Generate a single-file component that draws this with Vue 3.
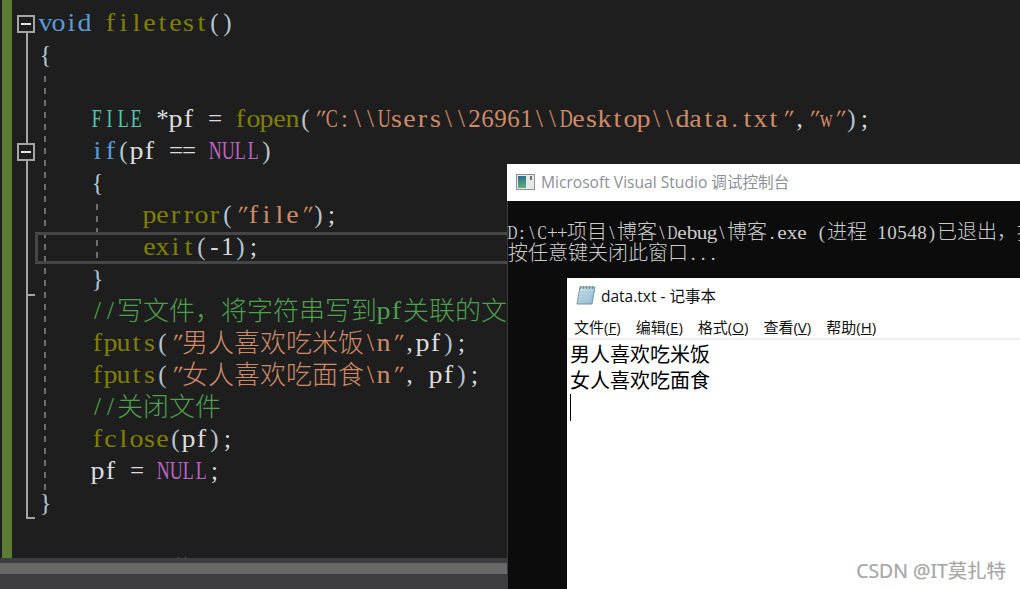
<script setup>
const code = [
  [['kw', 'void '], ['fn', 'filetest'], ['pn', '()']],
  [['pn', '{']],
  [],
  [['ty', '    FILE'], ['id', ' *pf = '], ['fn', 'fopen'], ['pn', '('], ['st', '"C:\\\\Users\\\\26961\\\\Desktop\\\\data.txt"'], ['id', ','], ['st', '"w"'], ['pn', ')'], ['id', ';']],
  [['kw', '    if'], ['pn', '('], ['id', 'pf == '], ['mc', 'NULL'], ['pn', ')']],
  [['pn', '    {']],
  [['fn', '        perror'], ['pn', '('], ['st', '"file"'], ['pn', ')'], ['id', ';']],
  [['fn', '        exit'], ['pn', '('], ['id', '-1'], ['pn', ')'], ['id', ';']],
  [['pn', '    }']],
  [['cm', '    //'], ['cm cjk', '写文件，将字符串写到'], ['cm', 'pf'], ['cm cjk', '关联的文件中']],
  [['fn', '    fputs'], ['pn', '('], ['st', '"'], ['st cjk', '男人喜欢吃米饭'], ['st', '\\n"'], ['id', ',pf'], ['pn', ')'], ['id', ';']],
  [['fn', '    fputs'], ['pn', '('], ['st', '"'], ['st cjk', '女人喜欢吃面食'], ['st', '\\n"'], ['id', ', pf'], ['pn', ')'], ['id', ';']],
  [['cm', '    //'], ['cm cjk', '关闭文件']],
  [['fn', '    fclose'], ['pn', '('], ['id', 'pf'], ['pn', ')'], ['id', ';']],
  [['id', '    pf = '], ['mc', 'NULL'], ['id', ';']],
  [['pn', '}']],
  [],
  [['kw', 'void '], ['fn', 'test1'], ['pn', '()']],
]
const consoleLines = [
  [['', 'D:\\C++'], ['cjk', '项目'], ['', '\\'], ['cjk', '博客'], ['', '\\Debug\\'], ['cjk', '博客'], ['', '.exe ('], ['cjk', '进程'], ['', ' 10548)'], ['cjk', '已退出，按下任意键']],
  [['cjk', '按任意键关闭此窗口'], ['', '...']],
]
const menus = [['文件', 'F'], ['编辑', 'E'], ['格式', 'O'], ['查看', 'V'], ['帮助', 'H']]
const isCjk = (tok) => tok[0].includes('cjk')
const cellClass = (ch) => ({
  squeezed: /[A-Zmw]/.test(ch),
  stretched: /[a-ln-vx-z]/.test(ch),
  slanted: ch === '"',
})
</script>

<template>
  <div class="desktop">
    <section class="editor">
      <div class="code-area">
        <div class="change-bar"></div>
        <div class="code">
          <div v-for="(line, i) in code" :key="i" class="line">
            <template v-for="(tok, j) in line" :key="j">
              <span v-if="isCjk(tok)" :class="tok[0]">{{ tok[1] }}</span>
              <span v-else :class="tok[0]"><span v-for="(ch, k) in tok[1]" :key="k" class="cell" :class="cellClass(ch)">{{ ch }}</span></span>
            </template>
          </div>
        </div>
        <i class="fold-line one"></i>
        <i class="fold-line two"></i>
        <i class="fold-tick"></i>
        <i class="fold-end"></i>
        <i class="fold-box first"></i>
        <i class="fold-box second"></i>
        <i class="guide outer"></i>
        <i class="guide inner"></i>
        <div class="current-line"></div>
      </div>
      <div class="hscroll"><div class="thumb"></div></div>
    </section>

    <section class="console">
      <header class="console-title">
        <svg class="console-icon" width="19" height="18" viewBox="0 0 19 18">
          <defs>
            <linearGradient id="cg" x1="0" y1="0" x2="0" y2="1">
              <stop offset="0" stop-color="#2f6f8f" />
              <stop offset="1" stop-color="#5fae7c" />
            </linearGradient>
          </defs>
          <rect x="0.5" y="1.5" width="18" height="15" fill="#e6e8ea" stroke="#8d9094" />
          <rect x="2" y="3" width="8" height="12" fill="url(#cg)" />
          <rect x="14" y="3" width="2" height="4" fill="#6f7478" />
        </svg>
        <span>Microsoft Visual Studio 调试控制台</span>
      </header>
      <div class="console-body">
        <div v-for="(line, i) in consoleLines" :key="i" class="console-line">
          <template v-for="(tok, j) in line" :key="j">
            <span v-if="isCjk(tok)" class="wide">{{ tok[1] }}</span>
            <span v-else><span v-for="(ch, k) in tok[1]" :key="k" class="cell" :class="cellClass(ch)">{{ ch }}</span></span>
          </template>
        </div>
      </div>
    </section>

    <section class="notepad">
      <header class="note-title">
        <svg width="20" height="21" viewBox="0 0 20 21">
          <defs>
            <linearGradient id="ng" x1="0" y1="0" x2="1" y2="1">
              <stop offset="0" stop-color="#d8e9ef" />
              <stop offset="1" stop-color="#7fb6cf" />
            </linearGradient>
          </defs>
          <path d="M4 2H19L16 19H1Z" fill="url(#ng)" stroke="#6f97a8" />
          <path d="M4.5 1V4M7.5 1V4M10.5 1V4M13.5 1V4M16.5 1V4" stroke="#7b8a92" stroke-width="1.2" />
          <path d="M4.5 7H16M4 10H15.5M3.5 13H15M3 16H14" stroke="#a9c7d4" />
        </svg>
        <span>data.txt - 记事本</span>
      </header>
      <nav class="note-menu">
        <span v-for="m in menus" :key="m[1]">{{ m[0] }}(<u>{{ m[1] }}</u>)</span>
      </nav>
      <div class="note-text">
        <div>男人喜欢吃米饭</div>
        <div>女人喜欢吃面食</div>
        <i class="caret"></i>
      </div>
    </section>

    <div class="watermark">CSDN @IT莫扎特</div>
  </div>
</template>

<style>
html, body { margin: 0; background: #1e1e1e; }
</style>

<style scoped>
.desktop {
  position: relative;
  width: 1020px;
  height: 589px;
  overflow: hidden;
  background: #1e1e1e;
}
.editor {
  display: flex;
  flex-direction: column;
  height: 589px;
}
.code-area {
  position: relative;
  display: flex;
  height: 558px;
  overflow: hidden;
  flex: none;
}
.change-bar {
  flex: none;
  width: 10px;
  margin-left: 2px;
  background: #5b7c33;
}
.code {
  margin-left: 27px;
  padding-top: 7px;
  font: 25px/32px "Liberation Serif", serif;
  color: #dcdcdc;
  white-space: pre;
}
.line { height: 32px; }
.cell {
  display: inline-block;
  width: 13px;
  text-align: center;
}
.squeezed { transform: translateX(-1px) scaleX(0.72); }
.stretched { transform: scaleX(1.12); }
.slanted { transform: skewX(-24deg); }
.kw { color: #569cd6; }
.fn { color: #808000; }
.pn { color: #b4c4d0; }
.id { color: #dcdcdc; }
.st { color: #d08a68; }
.cm { color: #4ea04e; }
.ty { color: #4ec9b0; }
.mc { color: #bd63c5; }
.cjk {
  font-family: "Noto Sans CJK SC", sans-serif;
  font-size: 26px;
  font-weight: 300;
  line-height: 20px;
  vertical-align: -1px;
}
.fold-line, .fold-tick, .fold-end, .fold-box, .guide, .current-line { position: absolute; }
.fold-line { left: 26px; width: 2px; background: #a5a5a5; }
.fold-line.one { top: 33px; height: 110px; }
.fold-line.two { top: 161px; height: 358px; }
.fold-tick { left: 28px; top: 294px; width: 7px; height: 2px; background: #a5a5a5; }
.fold-end { left: 26px; top: 517px; width: 9px; height: 2px; background: #a5a5a5; }
.fold-box {
  left: 17px;
  width: 18px;
  height: 18px;
  box-sizing: border-box;
  border: 2px solid #a5a5a5;
  background: #1e1e1e;
}
.fold-box::after {
  content: "";
  position: absolute;
  left: 2px;
  top: 6px;
  width: 10px;
  height: 2px;
  background: #e6e6e6;
}
.fold-box.first { top: 15px; }
.fold-box.second { top: 143px; }
.guide {
  width: 2px;
  background: repeating-linear-gradient(to bottom, #6e6e6e 0 6px, transparent 6px 12px);
}
.guide.outer { left: 44px; top: 76px; height: 414px; }
.guide.inner { left: 96px; top: 204px; height: 54px; }
.current-line {
  left: 35px;
  top: 232px;
  width: 480px;
  height: 32px;
  box-sizing: border-box;
  border: 3px solid #464646;
}
.hscroll {
  flex: 1;
  padding-top: 5px;
  background: #3e3e42;
}
.thumb { height: 11px; background: #686868; }

.console {
  position: absolute;
  left: 507px;
  top: 164px;
  width: 513px;
  height: 425px;
  background: #0c0c0c;
  box-shadow: inset 1px 0 #3c3c3c;
}
.console-title {
  display: flex;
  align-items: center;
  gap: 6px;
  height: 35px;
  padding: 0 0 2px 9px;
  background: #fff;
  font: 15.6px "Open Sans", "Noto Sans CJK SC", sans-serif;
  color: #8b9096;
  white-space: nowrap;
}
.console-body {
  padding-top: 21px;
  font: 19px/21px "Liberation Serif", serif;
  color: #cccccc;
  white-space: pre;
  overflow: hidden;
}
.console-body .cell { width: 10px; }
.console-line { height: 21px; }
.console-line + .console-line { margin-left: 1px; }
.wide {
  font-family: "Noto Sans CJK SC", sans-serif;
  font-size: 20px;
  font-weight: 300;
  line-height: 18px;
}

.notepad {
  position: absolute;
  left: 567px;
  top: 278px;
  width: 453px;
  height: 311px;
  background: #fff;
  color: #111;
}
.note-title {
  display: flex;
  align-items: center;
  gap: 5px;
  height: 34px;
  padding: 0 0 3px 9px;
  font: 15.5px "Open Sans", "Noto Sans CJK SC", sans-serif;
}
.note-menu {
  display: flex;
  gap: 15px;
  height: 25px;
  padding-left: 7px;
  box-sizing: border-box;
  border-bottom: 2px solid #f0f0f0;
  font: 15px/25px "Open Sans", "Noto Sans CJK SC", sans-serif;
  white-space: nowrap;
}
.note-text {
  padding: 1px 0 0 3px;
  font: 20px/26px "Noto Sans CJK SC", sans-serif;
  color: #000;
}
.caret {
  display: block;
  width: 1px;
  height: 27px;
  margin-top: 1px;
  background: #000;
}
.watermark {
  position: absolute;
  right: 14px;
  bottom: 5px;
  font: 19.4px/26px "Noto Sans", "Noto Sans CJK SC", sans-serif;
  color: #a8a8a8;
  text-shadow: 0 0 1px #d0d0d0;
  white-space: nowrap;
}
</style>
